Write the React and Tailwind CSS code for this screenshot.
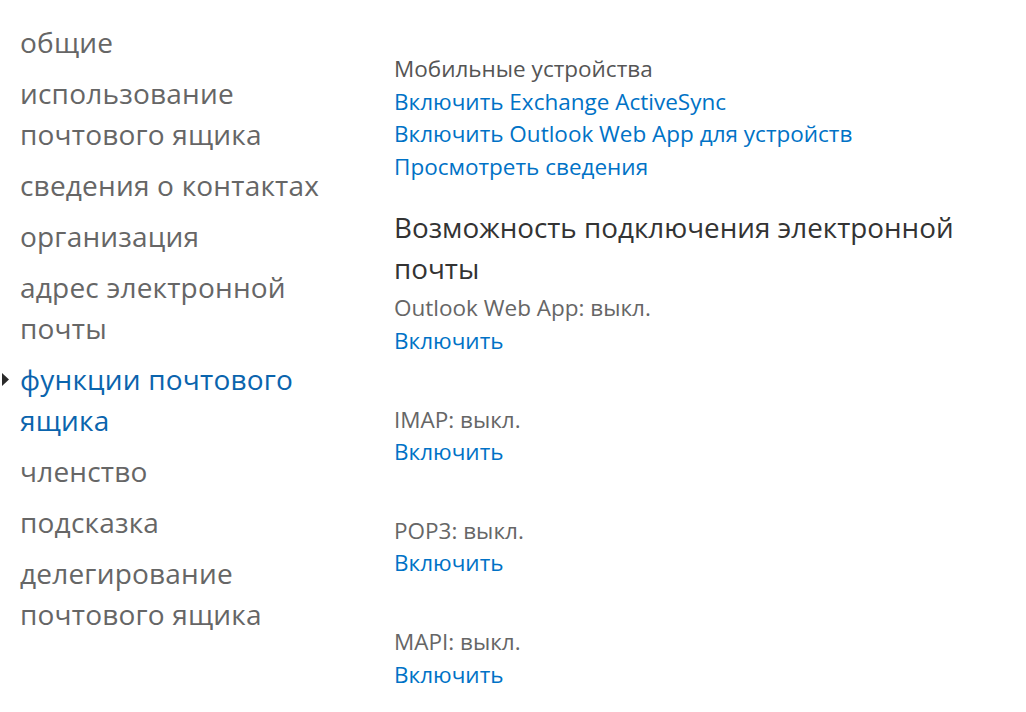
import React from 'react';

const NAV = [
  { label: 'общие' },
  { label: 'использование почтового ящика', lines: ['использование', 'почтового ящика'] },
  { label: 'сведения о контактах' },
  { label: 'организация' },
  { label: 'адрес электронной почты', lines: ['адрес электронной', 'почты'] },
  { label: 'функции почтового ящика', lines: ['функции почтового', 'ящика'], active: true },
  { label: 'членство' },
  { label: 'подсказка' },
  { label: 'делегирование почтового ящика', lines: ['делегирование', 'почтового ящика'] },
];

const PROTOCOLS = ['IMAP: выкл.', 'POP3: выкл.', 'MAPI: выкл.'];

const Arrow = () => (
  <svg width="9" height="15" viewBox="0 0 9 15" className="absolute left-[1px] top-[13px]">
    <polygon points="1,1 8,7.5 1,14" fill="#2a2a2a" />
  </svg>
);

export default function App() {
  return (
    <div
      className="w-[1026px] h-[712px] bg-white flex overflow-hidden"
      style={{ fontFamily: '"Open Sans", "Noto Sans", sans-serif' }}
    >
      {/* Left navigation */}
      <nav className="w-[394px] shrink-0 pt-[22px] pl-[20px]">
        <ul className="flex flex-col gap-[10px]">
          {NAV.map((item) => (
            <li
              key={item.label}
              className={`relative -ml-[20px] pl-[20px] text-[28px] leading-[41px] tracking-[0.2px] ${item.active ? 'text-[#0a64ad]' : 'text-[#666]'}`}
            >
              {item.active && <Arrow />}
              {(item.lines || [item.label]).map((l) => (
                <div key={l}>{l}</div>
              ))}
            </li>
          ))}
        </ul>
      </nav>

      {/* Right content */}
      <div className="flex-1 pt-[53px] text-[22.5px] leading-[32.6px]">
        <div className="text-[#555]">Мобильные устройства</div>
        <div className="text-[#0072c6]">Включить Exchange ActiveSync</div>
        <div className="text-[#0072c6]">Включить Outlook Web App для устройств</div>
        <div className="text-[#0072c6]">Просмотреть сведения</div>

        <h2 className="mt-[24px] text-[27.8px] leading-[41px] text-[#333] w-[600px]">
          Возможность подключения электронной почты
        </h2>

        <div className="mt-[3px] flex flex-col gap-[46px]">
          <div>
            <div className="text-[#666]">Outlook Web App: выкл.</div>
            <div className="text-[#0072c6]">Включить</div>
          </div>
          {PROTOCOLS.map((p) => (
            <div key={p}>
              <div className="text-[#666]">{p}</div>
              <div className="text-[#0072c6]">Включить</div>
            </div>
          ))}
        </div>
      </div>
    </div>
  );
}
